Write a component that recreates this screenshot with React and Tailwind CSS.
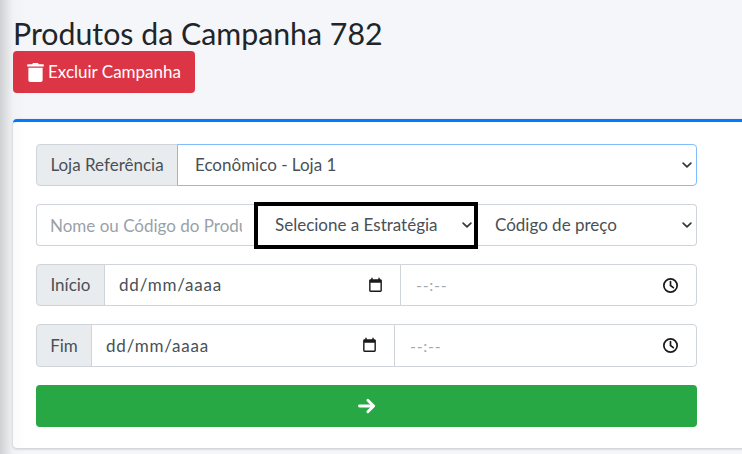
import React from 'react'

const border = 'border border-[#ced4da]'

function Chevron({ className = '' }) {
  return (
    <svg width="16" height="16" viewBox="0 0 16 16" className={className}>
      <path d="M2 5l6 6 6-6" fill="none" stroke="#343a40" strokeWidth="2.600" strokeLinecap="round" strokeLinejoin="round" transform="translate(2.800 2.800) scale(0.65)" />
    </svg>
  )
}

function CalendarIcon() {
  return (
    <svg width="17" height="17" viewBox="0 0 24 24" fill="#1a1a1a">
      <path d="M19 3h-1V1h-2v2H8V1H6v2H5C3.900 3 3 3.900 3 5v14c0 1.100.9 2 2 2h14c1.100 0 2-.9 2-2V5c0-1.100-.9-2-2-2zm0 16H5V8h14v11z" />
    </svg>
  )
}

function ClockIcon() {
  return (
    <svg width="17" height="17" viewBox="0 0 24 24" fill="none" stroke="#1a1a1a" strokeWidth="2.400">
      <circle cx="12" cy="12" r="9.400" />
      <path d="M12 6.500V12l4 3" strokeLinecap="round" />
    </svg>
  )
}

function Addon({ children, width }) {
  return (
    <div className={`${width} flex h-full items-center justify-center rounded-l bg-[#e9ecef] ${border} text-[17px] text-[#495057]`}>
      {children}
    </div>
  )
}

function DateRow({ label, addonWidth, dateWidth, height }) {
  return (
    <div className={`flex ${height} w-full`}>
      <Addon width={addonWidth}>{label}</Addon>
      <div className={`${dateWidth} -ml-px flex h-full items-center justify-between ${border} bg-white pl-[14px] pr-[16px] text-[17px] tracking-[0.8px] text-[#495057]`}>
        <span>dd/mm/aaaa</span>
        <CalendarIcon />
      </div>
      <div className={`-ml-px flex h-full flex-1 items-center justify-between rounded-r ${border} bg-white pl-[15px] pr-[17px] text-[16px] tracking-[0.7px] text-[#a3a9af]`}>
        <span>--:--</span>
        <ClockIcon />
      </div>
    </div>
  )
}

export default function App() {
  return (
    <div className="relative h-[454px] w-[742px] overflow-hidden bg-[#f4f6f9] font-['Lato','Noto_Sans',sans-serif]">
      {/* sidebar shadow */}
      <div className="pointer-events-none absolute inset-y-0 left-0 z-10 w-[26px] bg-gradient-to-r from-black/15 via-black/[0.015] to-transparent" />

      <div className="pl-[13px] pt-[15px]">
        <h1 className="text-[30.300px] leading-[36px] text-[#212529]">Produtos da Campanha 782</h1>

        <button className="flex h-[42px] w-[182px] items-center justify-center gap-[4px] rounded bg-[#dc3545] text-[17px] text-white">
          <svg width="17" height="19" viewBox="0 0 448 512" fill="white">
            <path d="M32 464a48 48 0 0 0 48 48h288a48 48 0 0 0 48-48V128H32zM432 32H312l-9.400-18.700A24 24 0 0 0 281.100 0H166.800a23.700 23.700 0 0 0-21.400 13.300L136 32H16A16 16 0 0 0 0 48v32a16 16 0 0 0 16 16h416a16 16 0 0 0 16-16V48a16 16 0 0 0-16-16z" />
          </svg>
          Excluir Campanha
        </button>

        <div className="mt-[26px] h-[329px] w-[760px] rounded border-t-[3px] border-[#007bff] bg-white pl-[23px] pt-[22px] shadow-[0_1px_3px_rgba(0,0,0,0.2)]">
          <div className="flex w-[661px] flex-col gap-[18px]">
            <div className="flex h-[42px] w-full">
              <Addon width="w-[142px]">Loja Referência</Addon>
              <div className="-ml-px flex h-full flex-1 items-center justify-between rounded-r border border-[#80bdff] bg-white pl-[17px] pr-[1px] text-[17px] text-[#495057]">
                <span>Econômico - Loja 1</span>
                <Chevron />
              </div>
            </div>

            <div className="flex h-[42px] w-full items-center">
              <input
                readOnly
                placeholder="Nome ou Código do Produto"
                className={`h-full w-[218px] rounded-l ${border} border-r-0 bg-white pl-[13px] pr-[12px] text-[17px] text-[#495057] outline-none placeholder:text-[#9aa1a8]`}
              />
              <div className="z-10 flex h-[47px] w-[224px] items-center justify-between border-[4px] border-black bg-white pl-[17px] text-[17px] text-[#495057]">
                <span>Selecione a Estratégia</span>
                <Chevron className="-mr-px" />
              </div>
              <div className={`flex h-full flex-1 items-center justify-between rounded-r ${border} border-l-0 bg-white pl-[17px] pr-[1px] text-[17px] text-[#495057]`}>
                <span>Código de preço</span>
                <Chevron />
              </div>
            </div>

            <DateRow label="Início" addonWidth="w-[69px]" dateWidth="w-[297px]" height="h-[42px]" />
            <DateRow label="Fim" addonWidth="w-[56px]" dateWidth="w-[304px]" height="h-[43px]" />

            <button className="flex h-[42px] w-full items-center justify-center rounded bg-[#28a745]">
              <svg width="20" height="20" viewBox="0 0 24 24" fill="none" stroke="white" strokeWidth="3.400" strokeLinecap="round" strokeLinejoin="round">
                <path d="M3 12h17M13 5l7 7-7 7" />
              </svg>
            </button>
          </div>
        </div>
      </div>
    </div>
  )
}
